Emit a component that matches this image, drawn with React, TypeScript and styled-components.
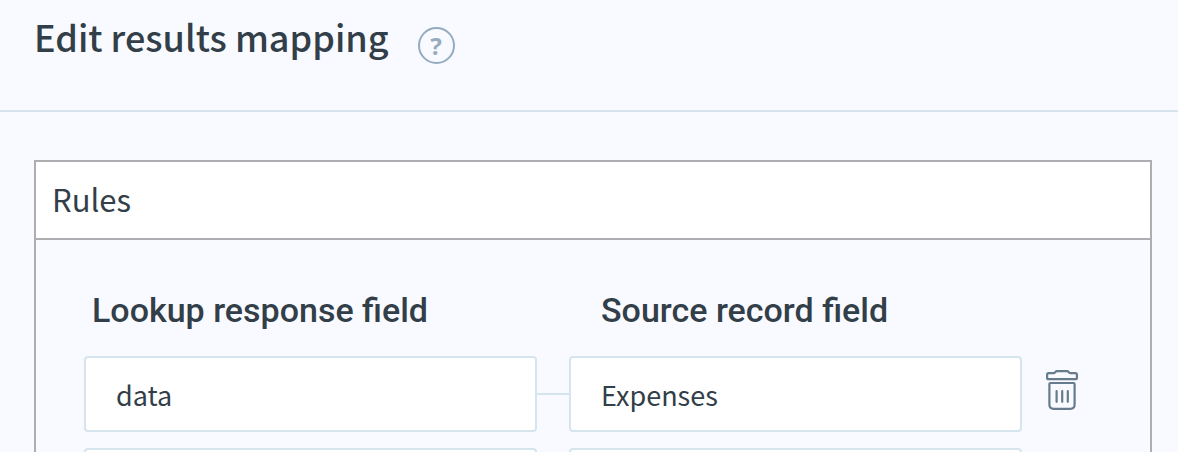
import React from "react";
import styled, { createGlobalStyle } from "styled-components";

const bodyFont = `"Noto Sans CJK SC", "Noto Sans", sans-serif`;
const ink = "#323e48";
const line = "#d6e4ee";
const frame = "#adadb2";

const GlobalStyle = createGlobalStyle`
  * { box-sizing: border-box; }
  body {
    margin: 0;
    background: #f9faff;
    color: ${ink};
    font-family: ${bodyFont};
  }
`;

const Page = styled.div`
  display: flex;
  flex-direction: column;
  height: 100vh;
  overflow: hidden;
`;

const Header = styled.header`
  display: flex;
  flex: none;
  align-items: flex-start;
  gap: 29px;
  padding: 12px 34px 46px;
  border-bottom: 2px solid ${line};
`;

const Title = styled.h1`
  margin: 0;
  font-size: 36px;
  font-weight: 500;
  line-height: 48px;
`;

const HelpButton = styled.button`
  width: 37px;
  height: 37px;
  margin-top: 15px;
  padding: 0;
  border: 2px solid #94abc0;
  border-radius: 50%;
  background: none;
  color: #94abc0;
  font-family: "Noto Sans", sans-serif;
  font-size: 24px;
  font-weight: 700;
  line-height: 32px;
  cursor: pointer;
`;

const Panel = styled.section`
  flex: none;
  margin: 48px 26px 48px 34px;
  border: 2px solid ${frame};
`;

const PanelTitle = styled.h2`
  margin: 0;
  padding: 15px 16px 17px;
  border-bottom: 2px solid ${frame};
  background: #fff;
  font-size: 31px;
  font-weight: 400;
  line-height: 44px;
`;

const Rules = styled.form`
  display: flex;
  flex-direction: column;
  gap: 16px;
  padding: 48px 72px 48px 48px;
`;

const Row = styled.div`
  display: grid;
  grid-template-columns: 1fr 32px 1fr 56px;
  align-items: center;
`;

const LabelRow = styled(Row)`
  margin-bottom: 8px;
`;

const ColumnLabel = styled.label<{ $indent: number }>`
  grid-column: span 2;
  padding-left: ${(p) => p.$indent}px;
  font-family: Roboto, sans-serif;
  font-size: 34px;
  font-weight: 500;
  line-height: 44px;
  white-space: nowrap;
`;

const Field = styled.input`
  width: 100%;
  min-width: 0;
  height: 76px;
  padding: 0 30px;
  border: 2px solid ${line};
  border-radius: 4px;
  background: #fff;
  color: ${ink};
  font-family: ${bodyFont};
  font-size: 27px;
`;

const Connector = styled.span`
  height: 2px;
  background: ${line};
`;

const DeleteButton = styled.button`
  display: flex;
  justify-self: end;
  padding: 0 0 8px;
  border: 0;
  background: none;
  color: #667b8c;
  cursor: pointer;
`;

function TrashIcon() {
  return (
    <svg
      width="32"
      height="40"
      viewBox="0 0 32 40"
      fill="none"
      stroke="currentColor"
      strokeWidth="2.2"
      strokeLinejoin="round"
      strokeLinecap="round"
      aria-hidden="true"
    >
      <path d="M2.600 3.200H7.500C9 3.200 9.300 1.200 11 1.200h10c1.700 0 2 2 3.500 2h4.900c1 0 1.500.5 1.500 1.500v3c0 1-.5 1.500-1.500 1.500H2.600c-1 0-1.500-.5-1.500-1.500v-3c0-1 .5-1.500 1.500-1.500Z" />
      <path d="M4.400 13h23.200c.6 0 1 .4 1 1v20.500c0 2.700-1.600 4.300-4.300 4.300H7.700c-2.700 0-4.300-1.600-4.300-4.300V14c0-.6.4-1 1-1Z" />
      <path d="M10.600 21.200v10.600M16.200 21.200v10.600M21.800 21.200v10.600" />
    </svg>
  );
}

const rules = [
  { id: "rule-1", lookup: "data", source: "Expenses" },
  { id: "rule-2", lookup: "", source: "" },
];

export default function App() {
  return (
    <>
      <GlobalStyle />
      <Page>
        <Header>
          <Title>Edit results mapping</Title>
          <HelpButton type="button" aria-label="Help">
            ?
          </HelpButton>
        </Header>
        <Panel>
          <PanelTitle>Rules</PanelTitle>
          <Rules>
            <LabelRow>
              <ColumnLabel id="lookup-label" htmlFor="rule-1-lookup" $indent={8}>
                Lookup response field
              </ColumnLabel>
              <ColumnLabel id="source-label" htmlFor="rule-1-source" $indent={32}>
                Source record field
              </ColumnLabel>
            </LabelRow>
            {rules.map((rule) => (
              <Row key={rule.id}>
                <Field
                  id={`${rule.id}-lookup`}
                  aria-labelledby="lookup-label"
                  defaultValue={rule.lookup}
                />
                <Connector />
                <Field
                  id={`${rule.id}-source`}
                  aria-labelledby="source-label"
                  defaultValue={rule.source}
                />
                <DeleteButton type="button" aria-label="Delete rule">
                  <TrashIcon />
                </DeleteButton>
              </Row>
            ))}
          </Rules>
        </Panel>
      </Page>
    </>
  );
}
